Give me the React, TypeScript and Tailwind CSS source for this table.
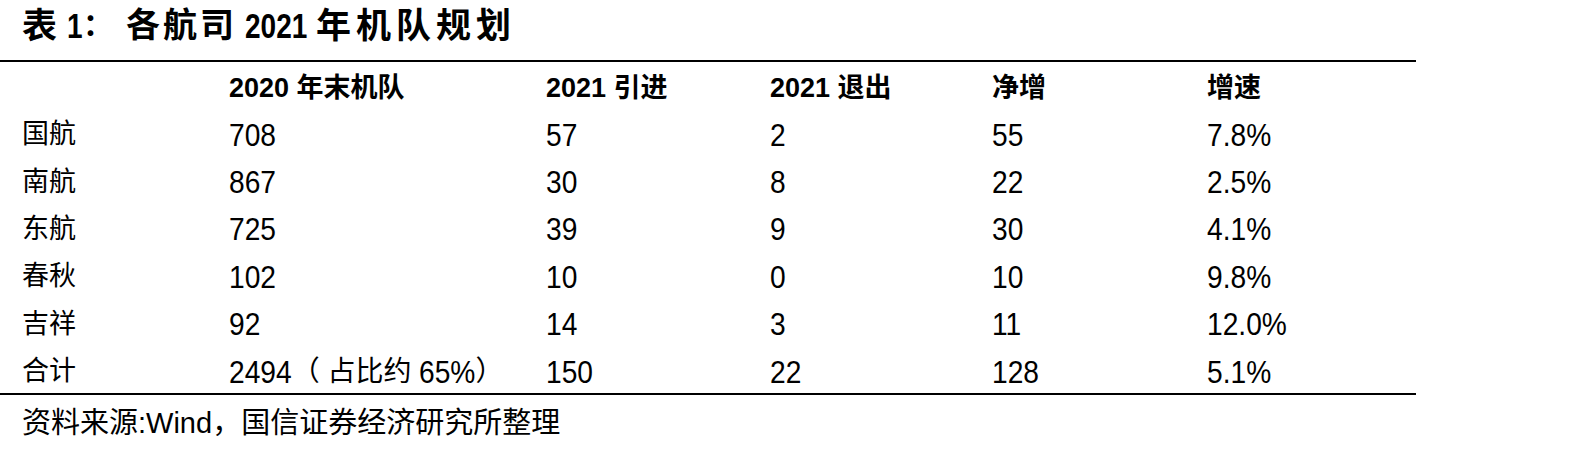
import React from "react";

const font = { fontFamily: '"Liberation Sans", "Noto Sans CJK SC", sans-serif' };

function N({ children, mr = "" }: { children: React.ReactNode; mr?: string }) {
  return (
    <span className={"inline-block text-[32px] origin-left scale-x-[0.88] " + mr}>{children}</span>
  );
}

const rows: React.ReactNode[][] = [
  ["国航", "708", "57", "2", "55", "7.8%"],
  ["南航", "867", "30", "8", "22", "2.5%"],
  ["东航", "725", "39", "9", "30", "4.1%"],
  ["春秋", "102", "10", "0", "10", "9.8%"],
  ["吉祥", "92", "14", "3", "11", "12.0%"],
  [
    "合计",
    <span key="m" className="inline-flex items-center">
      <N mr="mr-[-8.5px]">2494</N>
      <span className="text-[28px] whitespace-pre">（ 占比约 </span>
      <N mr="mr-[-7.7px]">65%</N>
      <span className="text-[28px]">）</span>
    </span>,
    "150",
    "22",
    "128",
    "5.1%",
  ],
];

const header = ["", "2020 年末机队", "2021 引进", "2021 退出", "净增", "增速"];

const colW = ["w-[207px]", "w-[317px]", "w-[224px]", "w-[222px]", "w-[215px]", "w-[209px]"];

export default function App() {
  return (
    <div className="w-[1595px] h-[456px] bg-white text-black" style={font}>
      <div className="w-[1416px]">
        <div className="h-[60px] pl-[22px] flex items-center font-bold leading-none pb-[10px] whitespace-nowrap">
          <span className="text-[35px] mr-[2px]">表</span>
          <span className="text-[30px]">&nbsp;</span>
          <span className="inline-block text-[35px] origin-left scale-x-[0.8] mr-[-3.9px]">1</span>
          <span className="text-[30px] mr-[13px]">：</span>
          <span className="text-[34px] tracking-[3px]">各航司</span>
          <span className="text-[30px]">&nbsp;</span>
          <span className="inline-block text-[35px] origin-left scale-x-[0.8] mr-[-15.6px]">2021</span>
          <span className="text-[30px]">&nbsp;</span>
          <span className="text-[35px] tracking-[5px]">年机队规划</span>
        </div>
        <div className="border-t-2 border-black">
          <div className="h-[47px] pl-[22px] flex items-center pt-[6px] text-[27px] font-bold leading-none">
            {header.map((h, i) => (
              <div key={i} className={colW[i]}>{h}</div>
            ))}
          </div>
          {rows.map((r, ri) => (
            <div key={ri} className="h-[47.4px] pl-[22px] flex items-center leading-none pt-[4px]">
              {r.map((c, ci) => (
                <div key={ci} className={colW[ci] + " whitespace-nowrap flex items-center"}>
                  {ci === 0 ? (
                    <span className="text-[27px]">{c}</span>
                  ) : typeof c === "string" ? (
                    <N>{c}</N>
                  ) : (
                    c
                  )}
                </div>
              ))}
            </div>
          ))}
        </div>
        <div className="border-t-2 border-black h-[61px] pl-[22px] flex items-center text-[29px] leading-none pb-[2px] whitespace-nowrap">
          资料来源:Wind，国信证券经济研究所整理
        </div>
      </div>
    </div>
  );
}
